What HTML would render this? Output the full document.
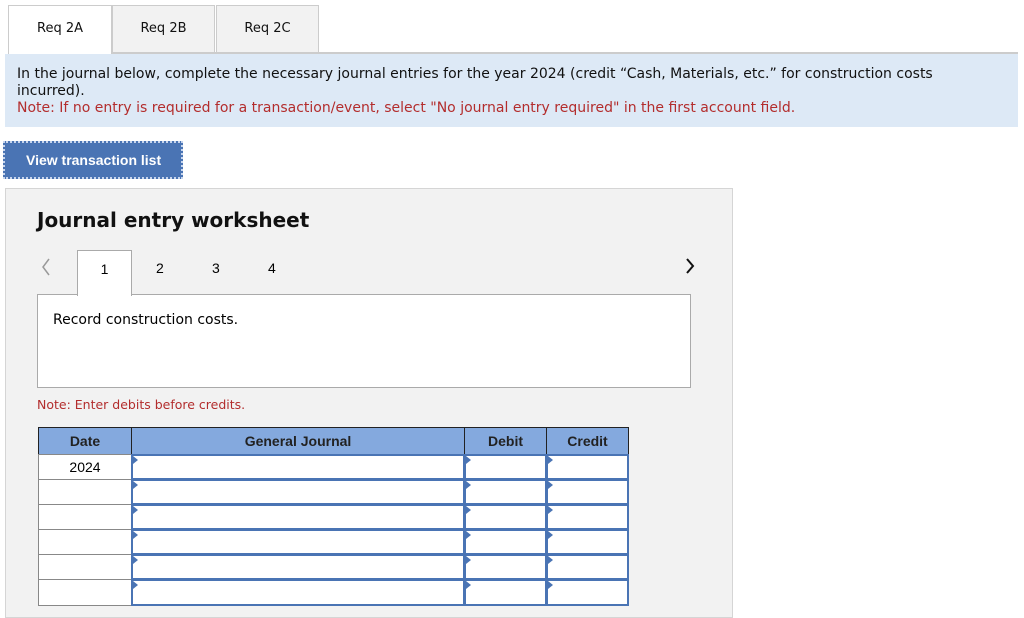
<!DOCTYPE html>
<html><head><style>
body{margin:0;width:1024px;height:614px;background:#fff;position:relative;overflow:hidden;font-family:"DejaVu Sans","Liberation Sans",sans-serif;}
.a{position:absolute}
.tab{position:absolute;top:5px;height:48px;border:1px solid #ccc;border-bottom:none;font-size:13px;text-align:center;line-height:46px;color:#111;box-sizing:border-box}
.inp{position:absolute;border:2px solid #4a74b4;background:#fff;box-sizing:border-box}
.inp:before{content:"";position:absolute;left:0;top:0;border-left:5px solid #4a74b4;border-top:4px solid transparent;border-bottom:4px solid transparent}
.cell{position:absolute;background:#fff;border:1px solid #888;box-sizing:border-box}
.hd{position:absolute;top:427px;height:28px;background:#84a9de;border:1px solid #222;box-sizing:border-box;font:bold 14px "Liberation Sans",sans-serif;text-align:center;line-height:26px;color:#222}
</style></head><body>
<div class="tab" style="left:8px;width:104px;background:#fff;height:49px">Req 2A</div>
<div class="tab" style="left:112px;width:103px;background:#f2f2f2">Req 2B</div>
<div class="tab" style="left:216px;width:103px;background:#f2f2f2">Req 2C</div>
<div class="a" style="left:112px;top:52px;width:906px;height:2px;background:#ccc"></div>
<div class="a" style="left:5px;top:54px;width:1013px;height:73px;background:#dde9f6;font-size:14px;line-height:17px;color:#111;padding:12px 50px 0 12px;box-sizing:border-box">In the journal below, complete the necessary journal entries for the year 2024 (credit “Cash, Materials, etc.” for construction costs incurred).<br><span style="color:#b32d2d">Note: If no entry is required for a transaction/event, select "No journal entry required" in the first account field.</span></div>
<div class="a" style="left:3px;top:141px;width:180px;height:38px;background:#4a74b4;border:2px dotted #c8d6ee;box-sizing:border-box;color:#fff;font:bold 14px 'Liberation Sans',sans-serif;line-height:34px;text-indent:21px">View transaction list</div>
<div class="a" style="left:5px;top:188px;width:728px;height:430px;background:#f2f2f2;border:1px solid #d5d5d5;box-sizing:border-box"></div>
<div class="a" style="left:37px;top:208px;font:bold 20px 'DejaVu Sans',sans-serif;color:#111">Journal entry worksheet</div>
<svg class="a" style="left:40px;top:258px" width="12" height="18"><path d="M9 1 L3 9 L9 17" fill="none" stroke="#999" stroke-width="1.5"/></svg>
<svg class="a" style="left:684px;top:258px" width="12" height="18"><path d="M3 1 L9 8 L3 15" fill="none" stroke="#111" stroke-width="2"/></svg>
<div class="a" style="left:77px;top:250px;width:55px;height:46px;background:#fff;border:1px solid #aaa;border-bottom:none;box-sizing:border-box;z-index:2;text-align:center;font:14px 'Liberation Sans',sans-serif;line-height:36px">1</div>
<div class="a" style="left:156px;top:260px;font:14px 'Liberation Sans',sans-serif">2</div>
<div class="a" style="left:212px;top:260px;font:14px 'Liberation Sans',sans-serif">3</div>
<div class="a" style="left:268px;top:260px;font:14px 'Liberation Sans',sans-serif">4</div>
<div class="a" style="left:37px;top:294px;width:654px;height:94px;background:#fff;border:1px solid #aaa;box-sizing:border-box;font-size:14px;padding:17px 0 0 15px">Record construction costs.</div>
<div class="a" style="left:37px;top:397px;font-size:12.5px;color:#b32d2d">Note: Enter debits before credits.</div>
<div class="a" style="left:38px;top:427px;width:591px;height:179px;border:1px solid #888;box-sizing:border-box"></div>
<div class="hd" style="left:38px;width:94px">Date</div>
<div class="hd" style="left:131px;width:334px">General Journal</div>
<div class="hd" style="left:464px;width:83px">Debit</div>
<div class="hd" style="left:546px;width:83px">Credit</div>
<div class="cell" style="left:38px;top:454px;width:94px;height:26px;font:14px 'Liberation Sans',sans-serif;text-align:center;line-height:24px">2024</div>
<div class="cell" style="left:38px;top:479px;width:94px;height:26px"></div>
<div class="cell" style="left:38px;top:504px;width:94px;height:26px"></div>
<div class="cell" style="left:38px;top:529px;width:94px;height:26px"></div>
<div class="cell" style="left:38px;top:554px;width:94px;height:26px"></div>
<div class="cell" style="left:38px;top:579px;width:94px;height:27px"></div>
<div class="inp" style="left:131px;top:454px;width:334px;height:26px"></div><div class="inp" style="left:464px;top:454px;width:83px;height:26px"></div><div class="inp" style="left:546px;top:454px;width:83px;height:26px"></div>
<div class="inp" style="left:131px;top:479px;width:334px;height:26px"></div><div class="inp" style="left:464px;top:479px;width:83px;height:26px"></div><div class="inp" style="left:546px;top:479px;width:83px;height:26px"></div>
<div class="inp" style="left:131px;top:504px;width:334px;height:26px"></div><div class="inp" style="left:464px;top:504px;width:83px;height:26px"></div><div class="inp" style="left:546px;top:504px;width:83px;height:26px"></div>
<div class="inp" style="left:131px;top:529px;width:334px;height:26px"></div><div class="inp" style="left:464px;top:529px;width:83px;height:26px"></div><div class="inp" style="left:546px;top:529px;width:83px;height:26px"></div>
<div class="inp" style="left:131px;top:554px;width:334px;height:26px"></div><div class="inp" style="left:464px;top:554px;width:83px;height:26px"></div><div class="inp" style="left:546px;top:554px;width:83px;height:26px"></div>
<div class="inp" style="left:131px;top:579px;width:334px;height:27px"></div><div class="inp" style="left:464px;top:579px;width:83px;height:27px"></div><div class="inp" style="left:546px;top:579px;width:83px;height:27px"></div>
</body></html>
